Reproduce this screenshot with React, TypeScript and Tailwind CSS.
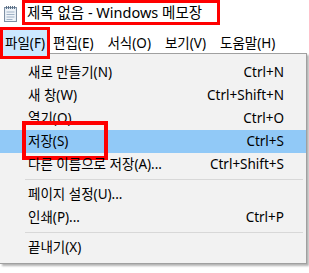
import React from "react";

const font = { fontFamily: '"Noto Sans", "Noto Sans CJK KR", sans-serif' };

function NotepadIcon() {
  return (
    <svg width="18" height="18" viewBox="0 0 18 18">
      <rect x="2.5" y="2.5" width="12" height="14" fill="#dfe9f2" stroke="#7d8fa3" strokeWidth="1" />
      <rect x="3.5" y="4" width="10" height="12" fill="#eef3f8" />
      <line x1="4.5" y1="7" x2="12.5" y2="7" stroke="#9fb2c6" strokeWidth="1" />
      <line x1="4.5" y1="9.5" x2="12.5" y2="9.5" stroke="#9fb2c6" strokeWidth="1" />
      <line x1="4.5" y1="12" x2="12.5" y2="12" stroke="#9fb2c6" strokeWidth="1" />
      <line x1="4.5" y1="14.5" x2="10.5" y2="14.5" stroke="#9fb2c6" strokeWidth="1" />
      {[4, 6, 8, 10, 12].map((x) => (
        <rect key={x} x={x} y="1" width="1" height="3" fill="#5a6f86" />
      ))}
    </svg>
  );
}

type Item = { label: string; shortcut?: string; active?: boolean } | "sep";

const items: Item[] = [
  { label: "새로 만들기(N)", shortcut: "Ctrl+N" },
  { label: "새 창(W)", shortcut: "Ctrl+Shift+N" },
  { label: "열기(O)...", shortcut: "Ctrl+O" },
  { label: "저장(S)", shortcut: "Ctrl+S", active: true },
  { label: "다른 이름으로 저장(A)...", shortcut: "Ctrl+Shift+S" },
  "sep",
  { label: "페이지 설정(U)..." },
  { label: "인쇄(P)...", shortcut: "Ctrl+P" },
  "sep",
  { label: "끝내기(X)" },
];

export default function App() {
  return (
    <div className="relative w-[309px] h-[273px] bg-white overflow-hidden text-black" style={font}>
      {/* title bar */}
      <div className="flex items-start h-[27px]">
        <div className="w-[22px] pt-[5px] pl-[2px]">
          <NotepadIcon />
        </div>
        <div className="h-[25px] w-[198px] border-[3px] border-[#ff0000] flex items-center pl-[2px] text-[14.5px] leading-none whitespace-nowrap">
          제목 없음 - Windows 메모장
        </div>
      </div>
      {/* menu bar */}
      <div className="flex items-start h-[26px] text-[13.5px] whitespace-nowrap">
        <div className="w-[50px] h-[32px] border-[3px] border-[#ff0000] bg-[#cce8ff] flex items-center justify-center relative z-10">
          파일(F)
        </div>
        <div className="flex items-center h-[32px] pl-[3px] gap-[14px]">
          <span>편집(E)</span>
          <span>서식(O)</span>
          <span>보기(V)</span>
          <span>도움말(H)</span>
        </div>
      </div>
      {/* dropdown */}
      <div className="absolute left-0 top-[53px] w-[307px] h-[211px] bg-[#f2f2f2] border-r border-b border-t border-[#a0a0a0] shadow-[2px_2px_2px_rgba(0,0,0,0.3)] pt-[7px] text-[13.5px] whitespace-nowrap">
        {items.map((it, i) =>
          it === "sep" ? (
            <div key={i} className="h-[7px] flex items-center pl-[25px] pr-[3px]">
              <div className="h-px w-full bg-[#d8d8d8]" />
            </div>
          ) : (
            <div
              key={i}
              className={`relative h-[23px] flex items-center justify-between pl-[28px] pr-[22px] ${
                it.active ? "bg-[#91c9f7]" : ""
              }`}
            >
              <span>{it.label}</span>
              <span>{it.shortcut ?? ""}</span>
              {it.active && (
                <div className="absolute left-[22px] top-[-9px] w-[86px] h-[39px] border-[4px] border-[#ff0000]" />
              )}
            </div>
          )
        )}
      </div>
    </div>
  );
}
